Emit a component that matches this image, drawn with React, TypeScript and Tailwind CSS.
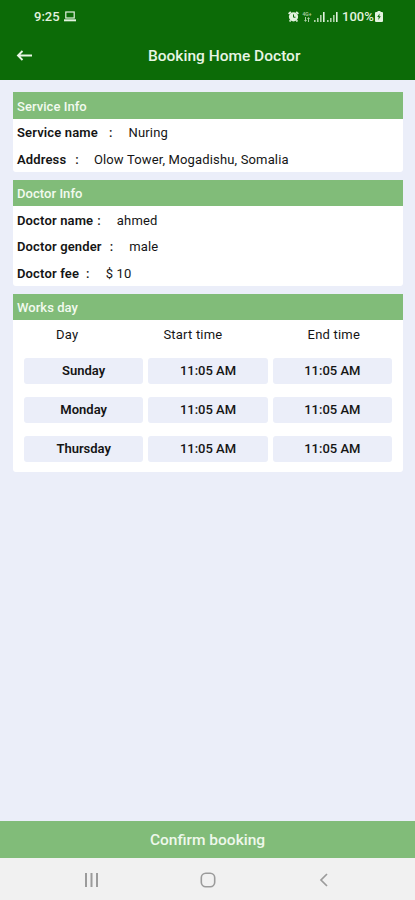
import React from 'react'

interface InfoItem {
  label: string
  value: string
  colonGap: string
  valueGap: string
}

const serviceInfo: InfoItem[] = [
  { label: 'Service name', value: 'Nuring', colonGap: 'ml-[11px]', valueGap: 'ml-[16px]' },
  { label: 'Address', value: 'Olow Tower, Mogadishu, Somalia', colonGap: 'ml-[9px]', valueGap: 'ml-[15px]' },
]

const doctorInfo: InfoItem[] = [
  { label: 'Doctor name', value: 'ahmed', colonGap: 'ml-[4px]', valueGap: 'ml-[16px]' },
  { label: 'Doctor gender', value: 'male', colonGap: 'ml-[8px]', valueGap: 'ml-[16px]' },
  { label: 'Doctor fee', value: '$ 10', colonGap: 'ml-[7px]', valueGap: 'ml-[16px]' },
]

const workDays = [
  { day: 'Sunday', start: '11:05 AM', end: '11:05 AM' },
  { day: 'Monday', start: '11:05 AM', end: '11:05 AM' },
  { day: 'Thursday', start: '11:05 AM', end: '11:05 AM' },
]

const StatusBar: React.FC = () => (
  <div className="flex h-8 items-center pt-px pl-[34px] pr-[32px] text-[13px] font-medium text-[#e3f2df]">
    <span className="w-[27px] whitespace-nowrap">9:25</span>
    <svg className="ml-[3px]" width="12" height="11" viewBox="0 0 12 11" fill="none" stroke="currentColor">
      <rect x="1.8" y="1" width="8.4" height="6" strokeWidth="1.2" />
      <path d="M0 9.3h12" strokeWidth="2" />
    </svg>
    <div className="ml-auto flex items-center">
      <svg width="11" height="11" viewBox="0 0 11 11" fill="none" stroke="currentColor">
        <circle cx="5.5" cy="5.8" r="4.6" fill="currentColor" stroke="none" />
        <path d="M5.5 3.4v2.8h2" stroke="#0c6b07" />
        <path d="M.6 2.8 2.8.8M10.4 2.8 8.2.8M1.6 10.5l1-1.2M9.4 10.5l-1-1.2" strokeWidth="1.7" />
      </svg>
      <div className="ml-[3px] flex w-[10px] flex-col items-center opacity-75">
        <span className="text-[5px] leading-[5px]">4G+</span>
        <svg width="6" height="5" viewBox="0 0 6 5" fill="currentColor">
          <path d="M1.5 5 0 3h1V0h1v3h1zM4.5 0 6 2H5v3H4V2H3z" />
        </svg>
      </div>
      {['ml-[2px]', 'ml-[2px]'].map((gap, i) => (
        <svg key={i} className={gap} width="11" height="11" viewBox="0 0 11 11" fill="currentColor">
          <path d="M0 9h1.6v2H0zM3 7h1.6v4H3zM6 4h1.6v7H6z" opacity=".75" />
          <path d="M9 1h1.6v10H9z" />
        </svg>
      ))}
      <span className="ml-[4px] w-[33px] whitespace-nowrap">100%</span>
      <svg width="8" height="11" viewBox="0 0 8 11" fill="none">
        <path d="M2.5 0h3v1H7a1 1 0 0 1 1 1v8a1 1 0 0 1-1 1H1a1 1 0 0 1-1-1V2a1 1 0 0 1 1-1h1.5z" fill="currentColor" />
        <path d="M4.6 2.5 2.2 6h1.5L3.3 9l2.5-3.7H4.3z" fill="#0c6b07" />
      </svg>
    </div>
  </div>
)

const Section: React.FC<{ title: string; children: React.ReactNode }> = ({ title, children }) => (
  <section className="overflow-hidden rounded-b-[3px] bg-white">
    <h2 className="flex h-[26.5px] items-center bg-[#81bc79] px-[4px] pt-[2px] text-[13px] font-medium tracking-[0.05px] text-[#f2faef]">
      {title}
    </h2>
    {children}
  </section>
)

const InfoList: React.FC<{ items: InfoItem[] }> = ({ items }) => (
  <div>
    {items.map((item) => (
      <div
        key={item.label}
        className="flex h-[26.5px] items-center px-[4px] pt-[2px] text-[13px] tracking-[0.15px] whitespace-pre"
      >
        <span className="font-semibold">{item.label}</span>
        <span className={`font-medium ${item.colonGap}`}>:</span>
        <span className={`font-[450] ${item.valueGap}`}>{item.value}</span>
      </div>
    ))}
  </div>
)

export default function App() {
  return (
    <div className="flex h-[900px] w-[415px] flex-col overflow-hidden bg-[#ebeef9] font-['Roboto',sans-serif] text-[#151515]">
      <header className="h-[79.5px] bg-[#0c6b07]">
        <StatusBar />
        <div className="flex h-12 items-center pl-[16px] text-[#e8f5e4]">
          <svg width="17" height="12" viewBox="0 0 17 12" fill="none" stroke="currentColor" strokeWidth="1.9">
            <path d="M16 5.5H2M6.5 1 2 5.5 6.5 10" />
          </svg>
          <h1 className="ml-[115px] pt-[2px] text-[15.5px] font-medium">Booking Home Doctor</h1>
        </div>
      </header>

      <main className="flex flex-1 flex-col gap-[8px] pt-[12.5px] pr-[12px] pl-[13px]">
        <Section title="Service Info">
          <InfoList items={serviceInfo} />
        </Section>
        <Section title="Doctor Info">
          <InfoList items={doctorInfo} />
        </Section>
        <Section title="Works day">
          <div className="flex h-[28px] items-center justify-between pt-[2px] pr-[43px] pl-[43px] text-[13px] font-[450] tracking-[0.2px]">
            <span>Day</span>
            <span>Start time</span>
            <span>End time</span>
          </div>
          <div className="flex flex-col gap-[13px] px-[11px] pt-[10px] pb-[10px]">
            {workDays.map((row) => (
              <div key={row.day} className="grid h-[26px] grid-cols-3 gap-[5px] text-center text-[13px] leading-[26px]">
                <span className="rounded-[3px] bg-[#ebeef9] font-semibold">{row.day}</span>
                <span className="rounded-[3px] bg-[#ebeef9] font-medium">{row.start}</span>
                <span className="rounded-[3px] bg-[#ebeef9] font-medium">{row.end}</span>
              </div>
            ))}
          </div>
        </Section>
      </main>

      <button className="h-[37.5px] bg-[#81bc79] pt-[3px] text-[15.5px] font-medium text-[#eef8eb]">Confirm booking</button>

      <nav className="flex h-[42px] items-center justify-between bg-[#f1f1f1] pt-px pr-[87px] pl-[84px] text-[#9b9b9b]">
        <svg width="15" height="14" viewBox="0 0 15 14" fill="none" stroke="currentColor" strokeWidth="2">
          <path d="M2 0v14M7.5 0v14M13 0v14" />
        </svg>
        <svg className="mr-[3px]" width="16" height="16" viewBox="0 0 16 16" fill="none" stroke="currentColor" strokeWidth="1.6">
          <rect x="1.3" y="1.3" width="13.4" height="13.4" rx="4.5" />
        </svg>
        <svg width="9" height="14" viewBox="0 0 9 14" fill="none" stroke="currentColor" strokeWidth="1.7">
          <path d="M8 1 2 7l6 6" />
        </svg>
      </nav>
    </div>
  )
}
